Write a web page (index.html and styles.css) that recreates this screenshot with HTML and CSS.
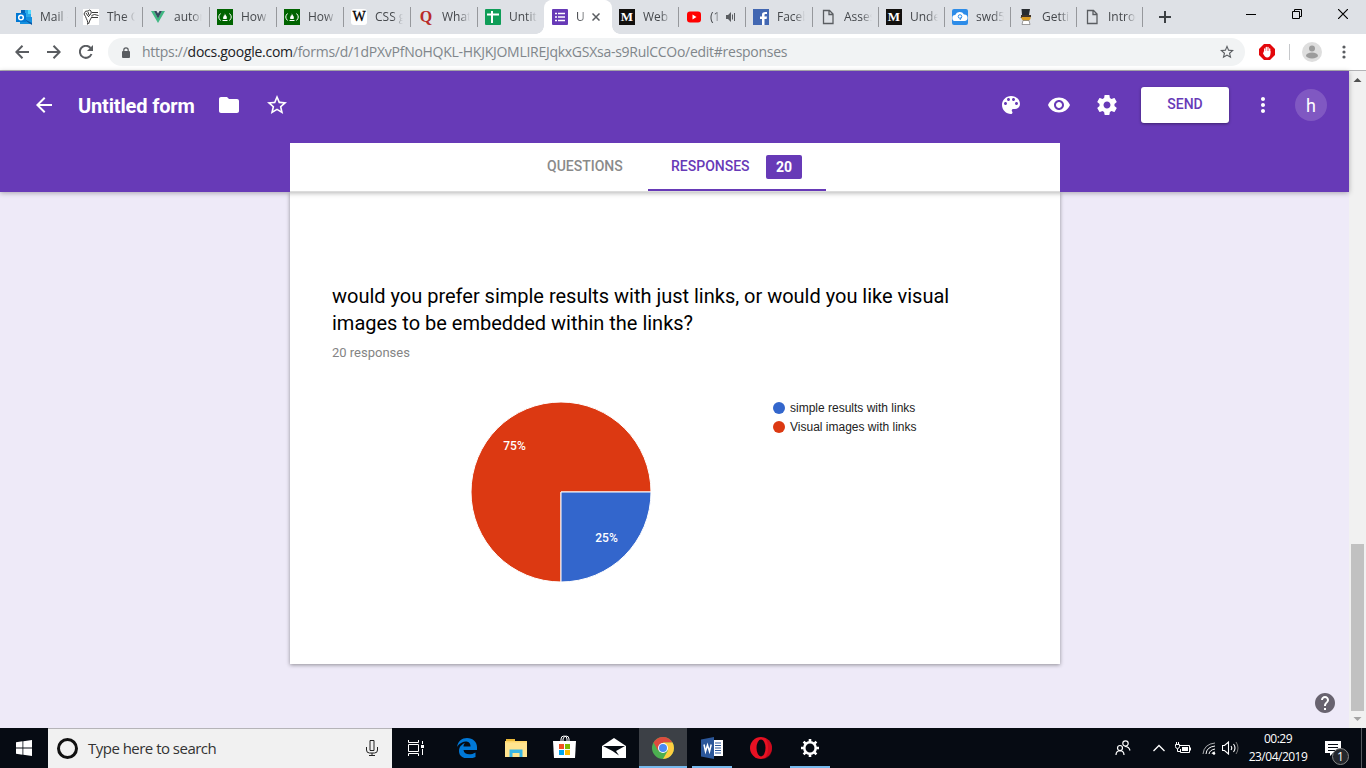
FILE: index.html
```html
<!DOCTYPE html>
<html lang="en">
<head>
<meta charset="utf-8">
<title>Untitled form</title>
<link rel="stylesheet" href="styles.css">
</head>
<body>
<div class="tabstrip">
  <div class="tab first"><svg viewBox="0 0 16 16"><path fill="#28a8ea" d="M5 1h10v7H5z"/><path fill="#0364b8" d="M5 1h4v4H5z"/><path fill="#50d9ff" d="M12 1h3v4h-3z"/><path fill="#1490df" d="M4 8l12 0v7H4z"/><path fill="#0a57a4" d="M4 8l12 6v2z"/><path fill="#0078d4" d="M0 4h10v9H0z"/><circle cx="5" cy="8.500" r="2.300" fill="none" stroke="#fff" stroke-width="1.500"/></svg><span class="label">Mail -</span></div>
  <div class="tab"><svg viewBox="0 0 16 16"><path fill="#fff" d="M0 0h16v16H0z"/><path d="M4.500 15.500c1-3-1-5-2-8L1 5q1-4 4-3 2-2 3 0 1 2-1 4l-2 2M3 4l2 3M5 3l1 3M5.500 15l1.500-4 2-3.500M9 3.500h6M8.500 6.500l3-1 4 1M9 8.500h6" fill="none" stroke="#222" stroke-width=".9"/></svg><span class="label">The C</span></div>
  <div class="tab"><svg viewBox="0 0 16 16"><path fill="#41b883" d="M1 2h3l4 7 4-7h3L8 14z"/><path fill="#35495e" d="M4 2h2.500L8 4.500 9.500 2H12L8 9.500z"/></svg><span class="label">autom</span></div>
  <div class="tab"><svg viewBox="0 0 16 16"><path fill="#006400" d="M0 0h16v16H0z"/><path d="M3.500 4.500Q0 8 3.500 11.500M12.500 4.500q3.500 3.500 0 7M5.500 11.500h5" fill="none" stroke="#fff"/><path fill="#fff" d="M7.800 4c0 2 3 3 1.800 6H6.400C5.400 8.500 7 7.500 7 6l.7.800z"/></svg><span class="label">How t</span></div>
  <div class="tab"><svg viewBox="0 0 16 16"><path fill="#006400" d="M0 0h16v16H0z"/><path d="M3.500 4.500Q0 8 3.500 11.500M12.500 4.500q3.500 3.500 0 7M5.500 11.500h5" fill="none" stroke="#fff"/><path fill="#fff" d="M7.800 4c0 2 3 3 1.800 6H6.400C5.400 8.500 7 7.500 7 6l.7.800z"/></svg><span class="label">How t</span></div>
  <div class="tab"><span class="fav wiki">W</span><span class="label">CSS g</span></div>
  <div class="tab"><span class="fav quora">Q</span><span class="label">What</span></div>
  <div class="tab"><svg viewBox="0 0 16 16"><rect width="16" height="16" rx="1" fill="#0f9d58"/><path d="M2 5.500h12M7 2v12" stroke="#fff" stroke-width="2"/></svg><span class="label">Untitl</span></div>
  <div class="tab active"><svg viewBox="0 0 16 16"><rect width="16" height="16" rx="1" fill="#673ab7"/><path d="M3 4.500h2M3 8h2M3 11.500h2M6 4.500h7M6 8h7M6 11.500h7" stroke="#fff" stroke-width="1.600"/></svg><span class="label">Un</span><svg class="close" viewBox="0 0 8 8"><path d="M.5.5l7 7M7.500.5l-7 7" stroke="#5a5d61" stroke-width="1.500"/></svg></div>
  <div class="tab after"><span class="fav medium">M</span><span class="label">Web</span></div>
  <div class="tab"><svg viewBox="0 0 16 16"><rect x="1" y="2.500" width="14" height="11" rx="3" fill="#f00"/><path fill="#fff" d="M6.500 5.500v5l4-2.500z"/></svg><span class="label yt">(1)</span><svg class="audio" viewBox="0 0 12 10"><path fill="#5a5d61" d="M1 3h2l3-3v10L3 7H1z"/><path d="M7.500 2.500v5M9.500 1v8" stroke="#5a5d61"/></svg></div>
  <div class="tab"><svg viewBox="0 0 16 16"><path fill="#4267b2" d="M0 0h16v16H0z"/><path fill="#fff" d="M9 16v-6H7V7.500h2V6c0-2.500 1.500-3.500 5-3v2c-2-.2-2.500.1-2.500 1v1.500H14l-.4 2.500h-2.100v6z"/></svg><span class="label">Faceb</span></div>
  <div class="tab narrow"><svg viewBox="0 0 16 16"><path d="M3.500 1.500h6L13 5v9.500H3.500zM9 1.500V5.500h4" fill="none" stroke="#5a5d61" stroke-width="1.300"/></svg><span class="label">Asses</span></div>
  <div class="tab narrow"><span class="fav medium">M</span><span class="label">Under</span></div>
  <div class="tab narrow"><svg viewBox="0 0 16 16"><rect width="16" height="16" rx="2" fill="#2d8ce8"/><path fill="#fff" d="M3.500 12a3 3 0 0 1-.3-6A5 5 0 0 1 12 5.500a3.200 3.200 0 0 1 .5 6.500z"/><circle cx="8" cy="7.500" r="1.800" fill="none" stroke="#2d8ce8"/><path d="M9.500 8l-1.500 3" stroke="#2d8ce8"/></svg><span class="label">swd50</span></div>
  <div class="tab narrow"><svg viewBox="0 0 16 16"><path fill="#292d31" d="M3.500 0h8.500l-1 6 1.500 3h-10L4 6z"/><path fill="#d99b22" d="M3.500 7h9v3l-2 2h-5l-2-2z"/><path fill="#41342a" d="M3 6h10v2H3z"/><path fill="#fff" stroke="#666" stroke-width=".6" d="M5 11.500h6l1 4H4z"/></svg><span class="label">Gettin</span></div>
  <div class="tab narrow"><svg viewBox="0 0 16 16"><path d="M3.500 1.500h6L13 5v9.500H3.500zM9 1.500V5.500h4" fill="none" stroke="#5a5d61" stroke-width="1.300"/></svg><span class="label">Introd</span></div>
  <div class="newtab"><svg viewBox="0 0 12 12"><path d="M6 0v12M0 6h12" stroke="#3c4043" stroke-width="2"/></svg></div>
  <div class="winctl">
    <svg viewBox="0 0 10 10"><path d="M0 5.500h10" stroke="#000"/></svg>
    <svg viewBox="0 0 10 10"><path d="M.5 2.500h7v7h-7zM2.500 2V.5h7v7H8" fill="none" stroke="#000"/></svg>
    <svg viewBox="0 0 10 10"><path d="M0 0l10 10M10 0L0 10" stroke="#000" stroke-width="1.200"/></svg>
  </div>
</div>
<div class="toolbar">
  <div class="nav">
    <svg viewBox="0 0 14 14"><path d="M14 7H1M7.500 .8L1.300 7l6.200 6.200" fill="none" stroke="#5a5d61" stroke-width="2"/></svg>
    <svg viewBox="0 0 14 14"><path d="M0 7h13M6.500 .8L12.700 7l-6.200 6.200" fill="none" stroke="#5a5d61" stroke-width="2"/></svg>
    <svg viewBox="0 0 14 14"><path d="M12.500 9A6 6 0 1 1 11.500 3" fill="none" stroke="#5a5d61" stroke-width="2"/><path fill="#5a5d61" d="M14 0v6H8z"/></svg>
  </div>
  <div class="omnibox">
    <svg class="lock" viewBox="0 0 8 11"><rect y="4" width="8" height="7" rx="1" fill="#5a5d61"/><path d="M1.800 4.500V3a2.200 2.200 0 0 1 4.400 0v1.500" fill="none" stroke="#5a5d61" stroke-width="1.200"/></svg>
    <span class="url">https://<b>docs.google.com</b>/forms/d/1dPXvPfNoHQKL-HKJKJOMLIREJqkxGSXsa-s9RulCCOo/edit#responses</span>
    <svg class="bookmark" viewBox="2 2 20 20"><path fill="#5a5d61" d="M22 9.240l-7.190-.62L12 2 9.190 8.630 2 9.240l5.460 4.730L5.820 21 12 17.270 18.180 21l-1.630-7.030L22 9.240zM12 15.400l-3.760 2.270 1-4.280-3.320-2.880 4.380-.38L12 6.100l1.710 4.040 4.380.38-3.320 2.880 1 4.280L12 15.400z"/></svg>
  </div>
  <svg class="adblock" viewBox="0 0 16 16"><path fill="#e3070b" d="M5 0h6l5 5v6l-5 5H5l-5-5V5z"/><path d="M5.700 9V5M7.300 8V3.500M9 8V3.500M10.700 9V5" stroke="#fff" stroke-width="1.300" stroke-linecap="round"/><path fill="#fff" d="M5 7h6.400v3c0 2-1.400 3.500-3.200 3.500S5.500 12 4 9.500z"/></svg>
  <i class="divider"></i>
  <svg class="person" viewBox="0 0 20 20"><circle cx="10" cy="10" r="10" fill="#dedede"/><circle cx="10" cy="6.500" r="3" fill="#9c9c9c"/><ellipse cx="10" cy="13.500" rx="6" ry="3" fill="#9c9c9c"/></svg>
  <svg class="kebab" viewBox="0 0 4 14"><g fill="#5a5d61"><circle cx="2" cy="2" r="1.600"/><circle cx="2" cy="7" r="1.600"/><circle cx="2" cy="12" r="1.600"/></g></svg>
</div>
<div class="viewport">
  <main class="page">
    <header class="header">
      <div class="appbar">
        <svg class="back" viewBox="0 0 24 24"><path fill="#fff" d="M20 11H7.830l5.590-5.590L12 4l-8 8 8 8 1.410-1.410L7.830 13H20v-2z"/></svg>
        <h1 class="title">Untitled form</h1>
        <svg viewBox="0 0 24 24"><path fill="#fff" d="M10 4H4c-1.100 0-1.990.9-1.990 2L2 18c0 1.100.9 2 2 2h16c1.100 0 2-.9 2-2V8c0-1.100-.9-2-2-2h-8l-2-2z"/></svg>
        <svg class="star" viewBox="0 0 24 24"><path fill="#fff" d="M22 9.240l-7.190-.62L12 2 9.190 8.630 2 9.240l5.460 4.730L5.820 21 12 17.270 18.180 21l-1.630-7.030L22 9.240zM12 15.400l-3.760 2.270 1-4.280-3.320-2.880 4.380-.38L12 6.100l1.710 4.040 4.380.38-3.320 2.880 1 4.280L12 15.400z"/></svg>
        <div class="actions">
          <svg viewBox="0 0 24 24"><path fill="#fff" d="M12 3c-4.970 0-9 4.030-9 9s4.030 9 9 9c.83 0 1.500-.67 1.500-1.500 0-.39-.15-.74-.39-1.010-.23-.26-.38-.61-.38-.99 0-.83.67-1.500 1.500-1.500H16c2.760 0 5-2.240 5-5 0-4.420-4.030-8-9-8zm-5.500 9c-.83 0-1.500-.67-1.500-1.500S5.670 9 6.500 9 8 9.670 8 10.500 7.330 12 6.500 12zm3-4C8.670 8 8 7.330 8 6.500S8.670 5 9.500 5s1.500.67 1.500 1.500S10.330 8 9.500 8zm5 0c-.83 0-1.500-.67-1.500-1.500S13.670 5 14.500 5s1.500.67 1.500 1.500S15.330 8 14.500 8zm3 4c-.83 0-1.500-.67-1.500-1.500S16.670 9 17.500 9s1.500.67 1.500 1.500-.67 1.500-1.500 1.500z"/></svg>
          <svg viewBox="0 0 24 24"><path fill="#fff" d="M12 4.500C7 4.500 2.730 7.610 1 12c1.730 4.390 6 7.500 11 7.500s9.270-3.110 11-7.500c-1.730-4.390-6-7.500-11-7.500zM12 17c-2.760 0-5-2.240-5-5s2.240-5 5-5 5 2.240 5 5-2.240 5-5 5zm0-8c-1.660 0-3 1.340-3 3s1.340 3 3 3 3-1.340 3-3-1.340-3-3-3z"/></svg>
          <svg viewBox="0 0 24 24"><path fill="#fff" d="M19.430 12.980c.04-.32.07-.64.07-.98s-.03-.66-.07-.98l2.110-1.650c.19-.15.24-.42.12-.64l-2-3.460c-.12-.22-.39-.3-.61-.22l-2.490 1c-.52-.4-1.080-.73-1.690-.98l-.38-2.650C14.460 2.180 14.250 2 14 2h-4c-.25 0-.46.18-.49.42l-.38 2.650c-.61.25-1.170.59-1.690.98l-2.490-1c-.23-.09-.49 0-.61.22l-2 3.460c-.13.22-.07.49.12.64l2.110 1.650c-.04.32-.07.65-.07.98s.03.66.07.98l-2.110 1.650c-.19.15-.24.42-.12.64l2 3.460c.12.22.39.3.61.22l2.490-1c.52.4 1.080.73 1.690.98l.38 2.650c.03.24.24.42.49.42h4c.25 0 .46-.18.49-.42l.38-2.650c.61-.25 1.170-.59 1.690-.98l2.490 1c.23.09.49 0 .61-.22l2-3.460c.12-.22.07-.49-.12-.64l-2.110-1.650zM12 15.500c-1.930 0-3.500-1.570-3.500-3.500s1.570-3.500 3.500-3.500 3.500 1.570 3.500 3.500-1.570 3.500-3.500 3.500z"/></svg>
        </div>
        <button class="send">SEND</button>
        <svg class="more" viewBox="0 0 24 24"><path fill="#fff" d="M12 8c1.100 0 2-.9 2-2s-.9-2-2-2-2 .9-2 2 .9 2 2 2zm0 2c-1.100 0-2 .9-2 2s.9 2 2 2 2-.9 2-2-.9-2-2-2zm0 6c-1.100 0-2 .9-2 2s.9 2 2 2 2-.9 2-2-.9-2-2-2z"/></svg>
        <span class="avatar">h</span>
      </div>
      <nav class="formtabs">
        <a class="ftab questions">QUESTIONS</a>
        <a class="ftab responses">RESPONSES<span class="count">20</span></a>
      </nav>
    </header>
    <section class="card">
      <h2 class="question">would you prefer simple results with just links, or would you like visual<br>images to be embedded within the links?</h2>
      <p class="total">20 responses</p>
      <div class="chart">
        <svg class="pie" viewBox="0 0 180 180"><path fill="#dc3912" stroke="#fff" d="M90 90V180A90 90 0 1 1 180 90z"/><path fill="#3366cc" stroke="#fff" d="M90 90H180A90 90 0 0 1 90 180z"/><text x="43.500" y="48">75%</text><text x="135.500" y="140">25%</text></svg>
        <ul class="legend">
          <li><i class="dot blue"></i>simple results with links</li>
          <li><i class="dot red"></i>Visual images with links</li>
        </ul>
      </div>
    </section>
    <svg class="help" viewBox="2 2 20 20"><path fill="#68636f" d="M12 2C6.480 2 2 6.480 2 12s4.480 10 10 10 10-4.480 10-10S17.520 2 12 2z"/><path fill="#fff" d="M13 19h-2v-2h2v2zm2.070-7.750l-.9.920C13.450 12.900 13 13.500 13 15h-2v-.5c0-1.100.45-2.100 1.170-2.830l1.240-1.260c.37-.36.59-.86.59-1.410 0-1.100-.9-2-2-2s-2 .9-2 2H8c0-2.210 1.790-4 4-4s4 1.790 4 4c0 .88-.36 1.680-.93 2.250z"/></svg>
  </main>
  <aside class="scrollbar"><svg viewBox="0 0 17 17"><path fill="#505050" d="M4.500 11h8l-4-4z"/></svg><i class="thumb"></i><svg viewBox="0 0 17 17"><path fill="#a3a3a3" d="M4.500 6h8l-4 4z"/></svg></aside>
</div>
<footer class="taskbar">
  <div class="start"><svg viewBox="0 0 16 16"><path fill="#fff" d="M0 2.200L6.500 1.300v6.300H0zM7.300 1.200L16 0v7.600H7.300zM0 8.400h6.500v6.300L0 13.800zM7.300 8.400H16V16l-8.700-1.200z"/></svg></div>
  <div class="search"><i class="cortana"></i><span class="hint">Type here to search</span><svg class="mic" viewBox="0 0 12 16"><path d="M4 .5h4v10H4zM.5 7v3q0 3 3 3h5q3 0 3-3V7M6 13v2.500M3 15.500h6" fill="none" stroke="#222"/></svg></div>
  <div class="app view"><svg viewBox="0 0 18 16"><path d="M1.500 0v2.500h10V0M1.500 16v-2.500h10V16M1.500 4.500h10v7h-10zM15.500 1v3M15.500 9v6" fill="none" stroke="#fff"/><path fill="#fff" d="M14 5h3v3h-3z"/></svg></div>
  <div class="app"><svg viewBox="0 0 20 20"><path fill="#0078d7" d="M0 9C1 3 5 0 10 0c6 0 10 4 10 9v3H6.500c.5 5 7 5.500 12 2.500V19C12 22 2 21 2 13c0-4 2.500-6.500 6-8-1 1-1.500 2-1.500 3.500h7c.3-5-5-6-8.500-4C2.500 5.800 1 7 0 9z"/></svg></div>
  <div class="app"><svg class="wide" viewBox="0 0 22 20"><path fill="#e9b838" d="M1 1h9v4H1z"/><path fill="#ffe48f" d="M0 3h22v16H0z"/><path fill="#ffd76a" d="M0 3h22v1.500H0z"/><path fill="#38b6e4" d="M4.500 19v-7.500h13V19h-3v-4h-7v4z"/></svg></div>
  <div class="app"><svg class="store" viewBox="0 0 24 24"><path d="M8 7V4q0-3 3-3t3 3v3M10 6V4q1-3 3-3 3 0 3 3v2" fill="none" stroke="#fff"/><path fill="#fff" d="M0 6h23l-1 17H1z"/><path fill="#f25022" d="M6 9h5v5H6z"/><path fill="#7fba00" d="M12 9h5v5h-5z"/><path fill="#00a4ef" d="M6 15h5v5H6z"/><path fill="#ffb900" d="M12 15h5v5h-5z"/></svg></div>
  <div class="app"><svg class="mail" viewBox="0 0 24 20"><path fill="#fff" d="M0 8L12 0l12 8v12H0z"/><path fill="#060b13" d="M1 8h22l-9 5 3 4.500L10.500 13z"/></svg></div>
  <div class="app current"><svg class="wide" viewBox="0 0 22 22"><circle cx="11" cy="11" r="11" fill="#4caf50"/><path fill="#dd4b3e" d="M1.500 5.500A11 11 0 0 1 20.500 5.500H11L6.200 13.800z"/><path fill="#ffcd40" d="M20.500 5.500A11 11 0 0 1 11 22l4.800-8.300L11 5.500z"/><circle cx="11" cy="11" r="5" fill="#fff"/><circle cx="11" cy="11" r="4" fill="#4a8af4"/></svg></div>
  <div class="app open"><svg class="wide" viewBox="0 0 22 22"><path fill="#fff" d="M12 3h10v16H12z"/><path d="M14 6h6M14 8.500h6M14 11h6M14 13.500h6M14 16h6" stroke="#2b579a"/><path fill="#2b579a" d="M0 2.500L13 0v22L0 19.500z"/><path d="M3 7.500l1.500 7L6.500 8l2 6.500 1.700-7" fill="none" stroke="#fff" stroke-width="1.500"/></svg></div>
  <div class="app"><svg class="wide" viewBox="0 0 22 22"><ellipse cx="11" cy="11" rx="11" ry="11" fill="#e81123"/><path fill="#a70014" d="M11 0c5 0 7 5 7 11s-2 11-7 11c9 0 11-5 11-11S19 1 11 0z" opacity=".4"/><ellipse cx="11" cy="11" rx="4.500" ry="8.500" fill="#060b13"/></svg></div>
  <div class="app open"><svg viewBox="0 0 20 20"><circle cx="10" cy="10" r="5.700" fill="none" stroke="#fff" stroke-width="2.500"/><path d="M10 1v3M10 16v3M1 10h3M16 10h3M3.600 3.600l2.200 2.200M14.200 14.200l2.200 2.200M16.400 3.600l-2.200 2.200M5.800 14.200l-2.200 2.200" stroke="#fff" stroke-width="2.600"/></svg></div>
  <div class="tray">
    <svg class="people" viewBox="0 0 16 16"><g fill="none" stroke="#fff" stroke-width="1.200"><circle cx="10.500" cy="3.500" r="2.700"/><path d="M10 6.500q4 0 5 4"/><circle cx="5" cy="8" r="2.500"/><path d="M1 15q0-4 4-4.300Q9 11 9 15"/></g></svg>
    <svg class="chev" viewBox="0 0 12 8"><path d="M.5 7L6 1.500 11.500 7" fill="none" stroke="#fff" stroke-width="1.300"/></svg>
    <svg class="battery" viewBox="0 0 16 14"><path d="M5 4.500h9.500v7h-9V8M15.500 6.500v3M.5 3.500h4v2q0 2-2 2t-2-2zM1.500 3.500V1M3.500 3.500V1M2.500 8v2.500h3" fill="none" stroke="#fff"/><path fill="#fff" d="M7 6h6v4H7z"/></svg>
    <svg class="wifi" viewBox="0 0 14 14"><g fill="none" stroke="#fff"><path d="M1 13Q2 3 13 2" opacity=".65"/><path d="M4 13Q4.500 6 13 5M7 13q.5-4 6-5M10 13q0-2 3-2"/></g><circle cx="12" cy="12.500" r="1.300" fill="#fff"/></svg>
    <svg class="sound" viewBox="0 0 17 14"><path d="M.5 4.500h2L6.500 1v12L2.500 9.500h-2zM9 5q1.500 2 0 4M11.500 3q3 4 0 8" fill="none" stroke="#fff" stroke-width="1.100"/><path d="M14 1q4 6 0 12" fill="none" stroke="#777"/></svg>
    <div class="clock"><span>00:29</span><span>23/04/2019</span></div>
    <div class="notice"><svg viewBox="0 0 16 15"><path fill="#fff" d="M0 0h16v12H8l-3 3v-3H0z"/><path d="M3 3.500h10M3 6.500h10M3 9.500h7" stroke="#060b13"/></svg><span class="badge">1</span></div>
    <i class="peek"></i>
  </div>
</footer>
</body>
</html>
```
FILE: styles.css
```css
* { box-sizing: border-box; }
body { margin: 0; width: 1366px; height: 768px; overflow: hidden; display: flex; flex-direction: column; font-family: Roboto, "Liberation Sans", sans-serif; }
svg { display: block; flex: none; }
h1, h2, p, ul { margin: 0; padding: 0; font-weight: 400; }
ul { list-style: none; }

.tabstrip { height: 34px; flex: none; background: #dee1e6; display: flex; padding-left: 8px; font: 12px "Open Sans", "Noto Sans", sans-serif; color: #45484c; }
.tab { width: 67px; height: 34px; flex: none; display: flex; align-items: center; padding-left: 7px; background: linear-gradient(#96989c, #96989c) 0 7px / 1px 20px no-repeat; }
.tab > svg:first-child, .fav { width: 16px; height: 16px; flex: none; margin-left: 1px; }
.narrow { width: 66px; }
.first, .after { background: none; }
.active { background: #fff; border-radius: 8px 8px 0 0; position: relative; box-shadow: 1px 0 #fff; }
.active::before, .active::after { content: ""; position: absolute; bottom: 0; width: 8px; height: 8px; }
.active::before { left: -8px; background: radial-gradient(circle at 0 0, #dee1e6 7.500px, #fff 8px); }
.active::after { right: -9px; background: radial-gradient(circle at 100% 0, #dee1e6 7.500px, #fff 8px); }
.label { margin-left: 8px; width: 28px; overflow: hidden; white-space: nowrap; line-height: 18px; -webkit-mask-image: linear-gradient(90deg, #000 62%, transparent); mask-image: linear-gradient(90deg, #000 62%, transparent); }
.active .label { width: 8px; -webkit-mask-image: linear-gradient(90deg, #000 30%, #0009); mask-image: linear-gradient(90deg, #000 30%, #0009); }
.label.yt { width: 9px; }
.close { width: 8px; height: 8px; margin-left: 8px; }
.audio { width: 12px; height: 10px; margin-left: 6px; }
.fav { font: 700 14px/16px "Liberation Serif", serif; text-align: center; }
.wiki { background: #fff; color: #000; border-radius: 3px; font-weight: 400; -webkit-text-stroke: .3px #000; }
.quora { color: #b92b27; font-size: 16px; }
.medium { background: #12100e; color: #fff; font-size: 13px; }
.newtab { width: 60px; background: linear-gradient(#96989c, #96989c) 0 7px / 1px 20px no-repeat; padding: 11px 0 0 17px; }
.newtab svg { width: 12px; height: 12px; }
.winctl { margin-left: auto; padding: 9px 18px 0 0; display: flex; gap: 36px; }
.winctl svg { width: 10px; height: 10px; }

.toolbar { height: 37px; flex: none; background: #fff; border-bottom: 1px solid #b3b3b6; display: flex; align-items: center; padding-left: 15px; }
.nav { display: flex; gap: 18px; width: 93px; }
.nav svg { width: 14px; height: 14px; }
.omnibox { width: 1137px; height: 28px; border-radius: 14px; background: #f1f3f4; display: flex; align-items: center; padding: 0 11px 0 14px; }
.lock { width: 8px; height: 11px; }
.url { margin-left: 12px; flex: 1; font: 14px/20px "Open Sans", "Noto Sans", sans-serif; color: #80868b; white-space: nowrap; letter-spacing: -.27px; }
.url b { font-weight: 400; color: #202124; }
.bookmark { width: 14px; height: 14px; }
.adblock { width: 16px; height: 16px; margin-left: 14px; }
.divider { width: 1px; height: 16px; background: #c6c8cb; margin-left: 14px; }
.person { width: 20px; height: 20px; margin-left: 12px; }
.kebab { width: 4px; height: 14px; margin-left: 20px; }

.viewport { height: 657px; flex: none; display: flex; }
.page { width: 1349px; background: #eeeaf8; position: relative; }
.header { height: 121px; background: #673ab7; position: relative; z-index: 1; display: flex; flex-direction: column; align-items: center; box-shadow: 0 1px 5px rgba(0,0,0,.3); }
.appbar { width: 100%; height: 72px; display: flex; align-items: center; padding: 0 22px 4px 32px; }
.appbar svg { width: 24px; height: 24px; }
.title { width: 117px; margin: 2px 22px 0; font: 700 20px/24px Roboto, sans-serif; letter-spacing: -.15px; color: #fff; white-space: nowrap; }
.star { margin-left: 24px; }
.actions { margin-left: auto; display: flex; gap: 24px; }
.send { width: 88px; height: 36px; margin-left: 22px; padding: 0 0 2px; border: 0; border-radius: 3px; background: #fff; color: #673ab7; font: 500 14px/34px Roboto, sans-serif; box-shadow: 0 1px 3px rgba(0,0,0,.4); }
.more { margin-left: 22px; }
.avatar { width: 32px; height: 32px; margin-left: 20px; border-radius: 50%; background: #8058c2; color: #fff; font-size: 18px; line-height: 34px; text-align: center; }
.formtabs { width: 770px; height: 48px; margin-left: 1px; background: #fff; display: flex; padding-left: 257px; font: 500 14px/47px Roboto, sans-serif; box-shadow: 0 1px #dcdcdc; }
.questions { width: 101px; color: #8a8a8a; }
.responses { width: 178px; color: #673ab7; border-bottom: 2px solid #673ab7; display: flex; align-items: center; padding-left: 23px; }
.count { width: 36px; height: 24px; margin: 2px 24px 0 auto; border-radius: 2px; background: #673ab7; color: #fff; font: 700 14px/24px Roboto, sans-serif; text-align: center; }
.card { width: 770px; height: 472px; margin-left: 290px; background: #fff; box-shadow: 0 1px 4px rgba(0,0,0,.4); padding: 91px 42px 0; }
.question { font-size: 20px; line-height: 27px; color: #000; white-space: nowrap; letter-spacing: -.01px; }
.total { margin-top: 8px; font-size: 13px; line-height: 16px; color: #848484; }
.chart { display: flex; margin-top: 41px; padding-left: 139px; }
.pie { width: 180px; height: 180px; overflow: visible; }
.pie text { fill: #fff; font: 500 12px Roboto, sans-serif; text-anchor: middle; }
.legend { margin-left: 122px; font: 12px/19px "Liberation Sans", Arial, sans-serif; color: #222; margin-top: -3px; }
.legend li { display: flex; align-items: center; white-space: nowrap; }
.dot { width: 12px; height: 12px; border-radius: 50%; margin: -1px 5px 0 0; }
.blue { background: #3366cc; }
.red { background: #dc3912; }
.help { position: absolute; right: 14px; bottom: 15px; width: 20px; height: 20px; }
.scrollbar { width: 17px; background: #f1f1f1; display: flex; flex-direction: column; align-items: center; }
.scrollbar svg { width: 17px; height: 17px; }
.thumb { width: 13px; height: 167px; background: #c1c1c1; margin-top: auto; }

.taskbar { height: 40px; flex: none; background: #060b13; display: flex; color: #fff; font-family: "Open Sans", "Noto Sans", sans-serif; }
.start { width: 48px; padding: 12px 16px; }
.start svg { width: 16px; height: 16px; }
.search { width: 344px; background: #f1f1f1; border-top: 1px solid #b5b4b8; display: flex; align-items: center; padding: 0 14px 1px 9px; }
.cortana { width: 21px; height: 21px; border: 3px solid #111; border-radius: 50%; }
.hint { margin-left: 10px; font-size: 15px; line-height: 20px; color: #333; letter-spacing: -.52px; }
.mic { width: 12px; height: 16px; margin-left: auto; }
.app { width: 48px; margin-right: 1px; display: flex; align-items: center; justify-content: center; }
.app svg { width: 20px; height: 20px; }
.app .wide { width: 22px; height: 22px; }
.view { margin-right: 3px; }
.view svg { width: 18px; height: 16px; }
.app .store { width: 24px; height: 24px; margin-top: -3px; }
.app .mail { width: 24px; height: 20px; }
.current { background: #3c4046; border-bottom: 2px solid #76b9ed; padding-top: 2px; }
.open { background: linear-gradient(#76b9ed, #76b9ed) 50% 100% / 40px 2px no-repeat; }
.tray { margin-left: auto; display: flex; align-items: center; }
.people { width: 16px; height: 16px; margin-right: 22px; }
.chev { width: 12px; height: 8px; margin-right: 10px; }
.battery { width: 16px; height: 14px; margin-right: 11px; }
.wifi { width: 14px; height: 14px; margin-right: 6px; }
.sound { width: 17px; height: 14px; margin-right: 6px; }
.clock { width: 66px; display: flex; flex-direction: column; align-items: center; font-size: 12px; line-height: 18px; letter-spacing: -.5px; white-space: nowrap; }
.notice { width: 16px; height: 15px; margin-left: 14px; position: relative; }
.notice svg { width: 16px; height: 15px; }
.badge { position: absolute; left: 7px; top: 7px; width: 17px; height: 17px; border: 1px solid #888; border-radius: 50%; background: #24272c; font-size: 12px; line-height: 15px; text-align: center; }
.peek { width: 1px; height: 40px; background: #55595f; margin: 0 4px 0 20px; }
```
